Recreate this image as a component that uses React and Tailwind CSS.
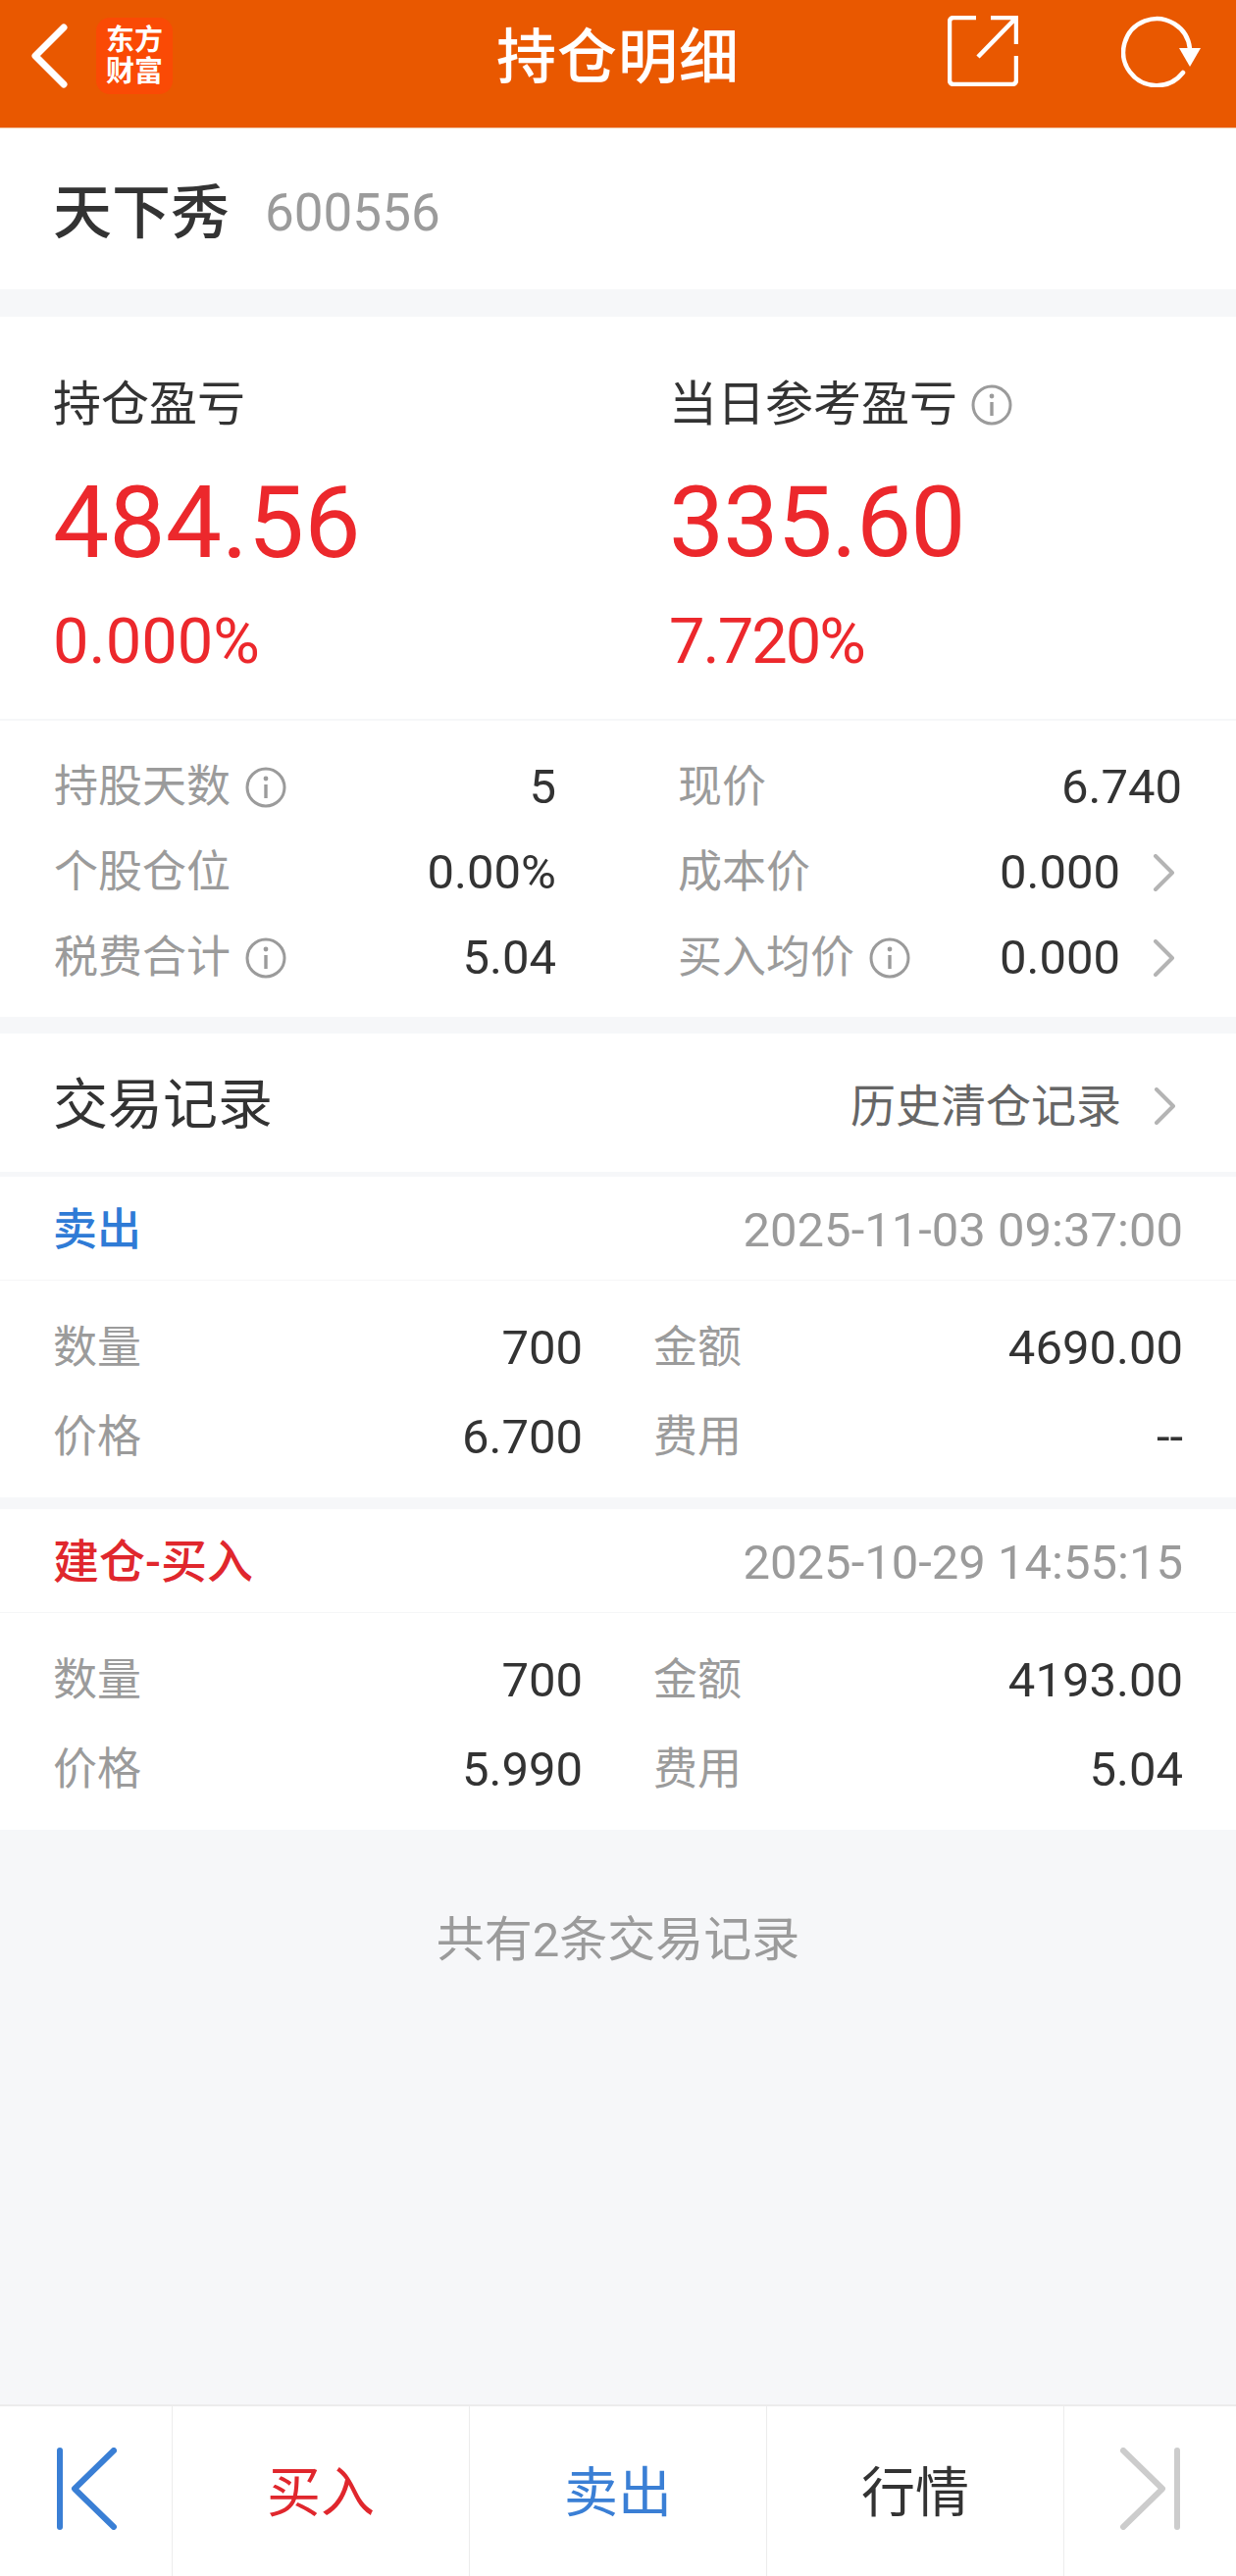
const font = { fontFamily: '"Roboto", "Noto Sans CJK SC", sans-serif' };

function Info() {
  return (
    <svg width="42" height="42" viewBox="0 0 42 42" className="shrink-0 text-[#9b9b9b]" fill="none">
      <circle cx="21" cy="21" r="19" stroke="currentColor" strokeWidth="3" />
      <circle cx="21" cy="12" r="2.4" fill="currentColor" />
      <path d="M21 18v14" stroke="currentColor" strokeWidth="3.4" />
    </svg>
  );
}

function Chevron({ className = '' }) {
  return (
    <svg width="24" height="38" viewBox="0 0 24 38" fill="none" className={`shrink-0 ${className}`}>
      <path d="M4 2l17 17L4 36" stroke="#b4b4b4" strokeWidth="4" strokeLinecap="round" strokeLinejoin="round" />
    </svg>
  );
}

function Stat({ label, value, info, arrow }) {
  return (
    <div className="flex items-center h-[87px]">
      <span className="text-[45px] text-[#9b9b9b]">{label}</span>
      {info && <span className="ml-[15px]"><Info /></span>}
      <span className="ml-auto text-[49px] text-[#333333]">{value}</span>
      {arrow ? <Chevron className="ml-8 mr-[7px]" /> : null}
    </div>
  );
}

function Trade({ title, titleClass, time, rows }) {
  return (
    <section className="bg-white shrink-0">
      <div className="flex items-center justify-between px-[54px] pt-[4px] h-[106px] border-b border-[#f5f6f7]">
        <span className={`font-medium ${titleClass}`}>{title}</span>
        <span className="text-[49px] text-[#9b9b9b]">{time}</span>
      </div>
      <div className="px-[54px] pt-[23px] pb-[16px]">
        {rows.map((row) => (
          <div key={row[0]} className="flex items-center h-[91px]">
            <div className="flex items-center justify-between w-[540px]">
              <span className="text-[45px] text-[#9b9b9b]">{row[0]}</span>
              <span className="text-[49px] text-[#333333]">{row[1]}</span>
            </div>
            <div className="flex items-center justify-between ml-[72px] flex-1">
              <span className="text-[45px] text-[#9b9b9b]">{row[2]}</span>
              <span className="text-[49px] text-[#333333]">{row[3]}</span>
            </div>
          </div>
        ))}
      </div>
    </section>
  );
}

export default function App() {
  return (
    <div className="w-[1260px] h-[2627px] bg-[#f6f7f9] flex flex-col overflow-hidden" style={font}>
      {/* Header */}
      <header className="relative h-[131px] bg-[#e95800] flex items-start justify-between shrink-0 border-b border-[#f3c9a8]">
        <div className="flex items-center pl-[32px] pt-[18px]">
          <svg width="38" height="66" viewBox="0 0 38 66" fill="none">
            <path d="M33 4L4 33l29 29" stroke="#fff" strokeWidth="7" strokeLinecap="round" strokeLinejoin="round" />
          </svg>
          <div className="ml-[28px] w-[78px] h-[78px] rounded-[14px] bg-[#fa4a05] flex items-center justify-center text-white text-[29px] leading-[32px] font-bold text-center">
            东方<br />财富
          </div>
        </div>
        <h1 className="absolute left-0 right-0 top-[19px] text-center text-[61px] leading-[80px] text-white font-medium tracking-[1px]">持仓明细</h1>
        <div className="flex items-start pt-[16px] pr-[36px]">
          <svg width="72" height="72" viewBox="0 0 72 72" fill="none">
            <path d="M29 2H6a4 4 0 0 0-4 4v60a4 4 0 0 0 4 4h60a4 4 0 0 0 4-4V41" stroke="#fff" strokeWidth="4.5" />
            <path d="M44 2h26v27M70 2L31 42" stroke="#fff" strokeWidth="4.5" />
          </svg>
          <svg width="81" height="73" viewBox="0 0 81 73" fill="none" className="ml-[105px]">
            <path d="M63 58A34 34 0 1 1 70 34" stroke="#fff" strokeWidth="4.5" strokeLinecap="round" />
            <path d="M59 33h22L70 52z" fill="#fff" />
          </svg>
        </div>
      </header>

      {/* Stock name */}
      <div className="h-[164px] bg-white flex items-center px-[54px] pt-[10px] shrink-0">
        <span className="text-[60px] text-[#333333] font-medium">天下秀</span>
        <span className="ml-[36px] text-[53px] text-[#9b9b9b]">600556</span>
      </div>

      {/* Summary */}
      <section className="mt-[28px] bg-white shrink-0">
        <div className="h-[412px] flex px-[54px] pt-[58px] border-b-2 border-[#f6f7f9]">
          <div className="w-[628px]">
            <div className="text-[49px] leading-[64px] text-[#333333]">持仓盈亏</div>
            <div className="mt-[28px] text-[102px] leading-[120px] text-[#ec282c]">484.56</div>
            <div className="mt-[21px] text-[65px] leading-[80px] text-[#ec282c]">0.000%</div>
          </div>
          <div>
            <div className="flex items-center text-[49px] leading-[64px] text-[#333333]">当日参考盈亏<span className="ml-[14px]"><Info /></span></div>
            <div className="mt-[28px] text-[100px] leading-[120px] tracking-[-1px] text-[#ec282c]">335.60</div>
            <div className="mt-[21px] text-[65px] leading-[80px] tracking-[-2px] text-[#ec282c]">7.720%</div>
          </div>
        </div>
        <div className="h-[302px] px-[55px] pt-[24px] flex">
          <div className="flex flex-col w-[512px]">
            <Stat label="持股天数" info value="5" />
            <Stat label="个股仓位" value="0.00%" />
            <Stat label="税费合计" info value="5.04" />
          </div>
          <div className="flex flex-col ml-[124px] flex-1">
            <Stat label="现价" value="6.740" />
            <Stat label="成本价" value="0.000" arrow />
            <Stat label="买入均价" info value="0.000" arrow />
          </div>
        </div>
      </section>

      {/* Trades */}
      <section className="mt-[17px] h-[146px] bg-white flex items-center px-[54px] pt-[4px] shrink-0 border-b-[5px] border-[#f6f7f9]">
        <span className="text-[56px] text-[#333333]">交易记录</span>
        <span className="ml-auto mt-[3px] text-[46px] text-[#666666]">历史清仓记录</span>
        <Chevron className="ml-8 mr-[7px] mt-[2px]" />
      </section>
      <Trade
        title="卖出"
        titleClass="text-[45px] text-[#2f7bd6]"
        time="2025-11-03 09:37:00"
        rows={[['数量', '700', '金额', '4690.00'], ['价格', '6.700', '费用', '--']]}
      />
      <div className="h-[12px] shrink-0" />
      <Trade
        title="建仓-买入"
        titleClass="text-[47px] text-[#e0272d]"
        time="2025-10-29 14:55:15"
        rows={[['数量', '700', '金额', '4193.00'], ['价格', '5.990', '费用', '5.04']]}
      />

      <div className="flex-1 text-center pt-[76px] text-[49px] text-[#9b9b9b]">共有2条交易记录</div>

      {/* Bottom bar */}
      <footer className="h-[175px] bg-white border-t-2 border-[#ececec] flex shrink-0">
        <div className="w-[176px] flex items-center justify-center border-r border-[#ececec] pb-[6px]">
          <svg width="62" height="84" viewBox="0 0 62 84" fill="none">
            <path d="M4 3v78" stroke="#3a7fd5" strokeWidth="6" strokeLinecap="round" />
            <path d="M59 3L19 42l40 39" stroke="#3a7fd5" strokeWidth="6" strokeLinecap="round" strokeLinejoin="round" />
          </svg>
        </div>
        <div className="w-[303px] flex items-center justify-center pt-[4px] border-r border-[#ececec] text-[55px] text-[#e0272d]">买入</div>
        <div className="w-[303px] flex items-center justify-center pt-[4px] border-r border-[#ececec] text-[55px] text-[#3a7fd5]">卖出</div>
        <div className="w-[303px] flex items-center justify-center pt-[4px] border-r border-[#ececec] text-[55px] text-[#333333]">行情</div>
        <div className="flex-1 flex items-center justify-center pb-[6px]">
          <svg width="62" height="84" viewBox="0 0 62 84" fill="none">
            <path d="M58 3v78" stroke="#cccccc" strokeWidth="6" strokeLinecap="round" />
            <path d="M3 3l40 39L3 81" stroke="#cccccc" strokeWidth="6" strokeLinecap="round" strokeLinejoin="round" />
          </svg>
        </div>
      </footer>
    </div>
  );
}
